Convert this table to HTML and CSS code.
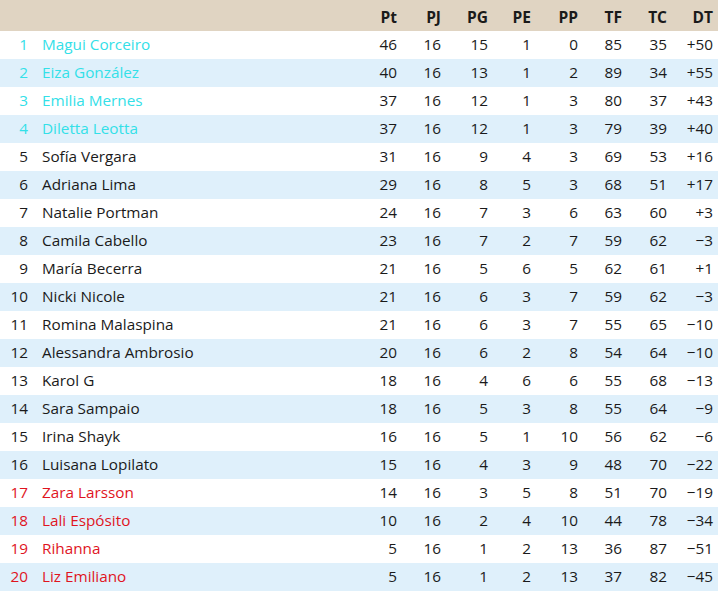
FILE: index.html
```html
<!DOCTYPE html>
<html lang="es">
<head>
<meta charset="utf-8">
<title>Tabla</title>
<link rel="stylesheet" href="styles.css">
</head>
<body>
<table class="standings">
<colgroup>
<col class="c-pos"><col class="c-name"><col class="c-pt"><col class="c-pj"><col class="c-pg"><col class="c-pe"><col class="c-pp"><col class="c-tf"><col class="c-tc"><col class="c-dt">
</colgroup>
<thead>
<tr><th class="pos"></th><th class="name"></th><th>Pt</th><th>PJ</th><th>PG</th><th>PE</th><th>PP</th><th>TF</th><th>TC</th><th class="dt">DT</th></tr>
</thead>
<tbody>
<tr class="top"><td class="pos">1</td><td class="name">Magui Corceiro</td><td>46</td><td>16</td><td>15</td><td>1</td><td>0</td><td>85</td><td>35</td><td class="dt">+50</td></tr>
<tr class="top"><td class="pos">2</td><td class="name">Eiza González</td><td>40</td><td>16</td><td>13</td><td>1</td><td>2</td><td>89</td><td>34</td><td class="dt">+55</td></tr>
<tr class="top"><td class="pos">3</td><td class="name">Emilia Mernes</td><td>37</td><td>16</td><td>12</td><td>1</td><td>3</td><td>80</td><td>37</td><td class="dt">+43</td></tr>
<tr class="top"><td class="pos">4</td><td class="name">Diletta Leotta</td><td>37</td><td>16</td><td>12</td><td>1</td><td>3</td><td>79</td><td>39</td><td class="dt">+40</td></tr>
<tr><td class="pos">5</td><td class="name">Sofía Vergara</td><td>31</td><td>16</td><td>9</td><td>4</td><td>3</td><td>69</td><td>53</td><td class="dt">+16</td></tr>
<tr><td class="pos">6</td><td class="name">Adriana Lima</td><td>29</td><td>16</td><td>8</td><td>5</td><td>3</td><td>68</td><td>51</td><td class="dt">+17</td></tr>
<tr><td class="pos">7</td><td class="name">Natalie Portman</td><td>24</td><td>16</td><td>7</td><td>3</td><td>6</td><td>63</td><td>60</td><td class="dt">+3</td></tr>
<tr><td class="pos">8</td><td class="name">Camila Cabello</td><td>23</td><td>16</td><td>7</td><td>2</td><td>7</td><td>59</td><td>62</td><td class="dt">−3</td></tr>
<tr><td class="pos">9</td><td class="name">María Becerra</td><td>21</td><td>16</td><td>5</td><td>6</td><td>5</td><td>62</td><td>61</td><td class="dt">+1</td></tr>
<tr><td class="pos">10</td><td class="name">Nicki Nicole</td><td>21</td><td>16</td><td>6</td><td>3</td><td>7</td><td>59</td><td>62</td><td class="dt">−3</td></tr>
<tr><td class="pos">11</td><td class="name">Romina Malaspina</td><td>21</td><td>16</td><td>6</td><td>3</td><td>7</td><td>55</td><td>65</td><td class="dt">−10</td></tr>
<tr><td class="pos">12</td><td class="name">Alessandra Ambrosio</td><td>20</td><td>16</td><td>6</td><td>2</td><td>8</td><td>54</td><td>64</td><td class="dt">−10</td></tr>
<tr><td class="pos">13</td><td class="name">Karol G</td><td>18</td><td>16</td><td>4</td><td>6</td><td>6</td><td>55</td><td>68</td><td class="dt">−13</td></tr>
<tr><td class="pos">14</td><td class="name">Sara Sampaio</td><td>18</td><td>16</td><td>5</td><td>3</td><td>8</td><td>55</td><td>64</td><td class="dt">−9</td></tr>
<tr><td class="pos">15</td><td class="name">Irina Shayk</td><td>16</td><td>16</td><td>5</td><td>1</td><td>10</td><td>56</td><td>62</td><td class="dt">−6</td></tr>
<tr><td class="pos">16</td><td class="name">Luisana Lopilato</td><td>15</td><td>16</td><td>4</td><td>3</td><td>9</td><td>48</td><td>70</td><td class="dt">−22</td></tr>
<tr class="bottom"><td class="pos">17</td><td class="name">Zara Larsson</td><td>14</td><td>16</td><td>3</td><td>5</td><td>8</td><td>51</td><td>70</td><td class="dt">−19</td></tr>
<tr class="bottom"><td class="pos">18</td><td class="name">Lali Espósito</td><td>10</td><td>16</td><td>2</td><td>4</td><td>10</td><td>44</td><td>78</td><td class="dt">−34</td></tr>
<tr class="bottom"><td class="pos">19</td><td class="name">Rihanna</td><td>5</td><td>16</td><td>1</td><td>2</td><td>13</td><td>36</td><td>87</td><td class="dt">−51</td></tr>
<tr class="bottom"><td class="pos">20</td><td class="name">Liz Emiliano</td><td>5</td><td>16</td><td>1</td><td>2</td><td>13</td><td>37</td><td>82</td><td class="dt">−45</td></tr>
</tbody>
</table>
</body>
</html>
```
FILE: styles.css
```css
html, body {
  margin: 0;
  padding: 0;
  background: #ffffff;
}
.standings {
  border-collapse: collapse;
  border-spacing: 0;
  width: 718px;
  table-layout: fixed;
  font-family: "Open Sans", sans-serif;
  font-size: 15.3px;
  line-height: 18px;
  color: #1a1a1a;
}
.c-pos { width: 28px; }
.c-name { width: 324px; }
.c-pt { width: 45px; }
.c-pj { width: 44px; }
.c-pg { width: 47px; }
.c-pe { width: 43px; }
.c-pp { width: 47px; }
.c-tf { width: 44px; }
.c-tc { width: 45px; }
.c-dt { width: 51px; }
.standings th,
.standings td {
  padding: 0;
  text-align: right;
  white-space: nowrap;
  vertical-align: middle;
}
.standings td {
  padding-bottom: 2px;
}
.standings .dt {
  padding-right: 5px;
}
.standings thead tr {
  background: #e0d4c2;
  height: 31px;
}
.standings th {
  font-weight: bold;
  font-size: 15.5px;
  color: #1a1a1a;
  padding-top: 3px;
}
.standings tbody tr {
  height: 28px;
}
.standings tbody tr:nth-child(even) {
  background: #dff0fb;
}
.standings .name {
  text-align: left;
  padding-left: 14px;
}
.standings tr.top .pos,
.standings tr.top .name {
  color: #33e0e8;
}
.standings tr.bottom .pos,
.standings tr.bottom .name {
  color: #e0141e;
}
```
